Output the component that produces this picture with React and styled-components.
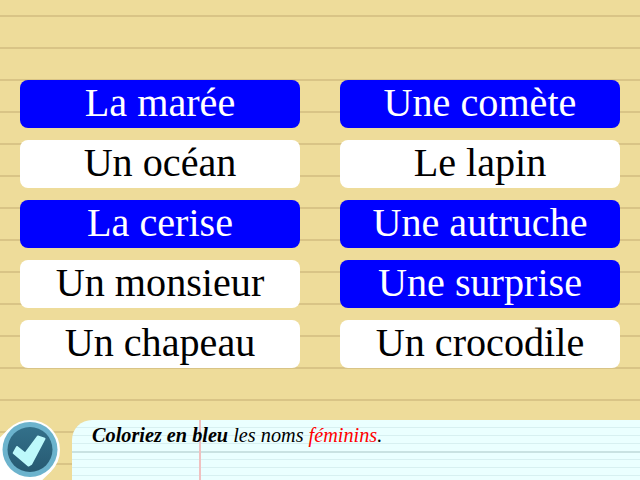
import styled, { createGlobalStyle } from "styled-components";

const GlobalStyle = createGlobalStyle`
  html, body {
    margin: 0;
    padding: 0;
    overflow: hidden;
  }
`;

const leftWords = [
  { label: "La marée", on: true },
  { label: "Un océan" },
  { label: "La cerise", on: true },
  { label: "Un monsieur" },
  { label: "Un chapeau" },
];

const rightWords = [
  { label: "Une comète", on: true },
  { label: "Le lapin" },
  { label: "Une autruche", on: true },
  { label: "Une surprise", on: true },
  { label: "Un crocodile" },
];

const App = () => {
  return (
    <Page>
      <GlobalStyle />
      <Board>
        <Column>
          {leftWords.map((w) => (
            <Word key={w.label} $on={w.on}>{w.label}</Word>
          ))}
        </Column>
        <Column>
          {rightWords.map((w) => (
            <Word key={w.label} $on={w.on}>{w.label}</Word>
          ))}
        </Column>
      </Board>
      <Footer>
        <CheckButton>
          <CheckIcon viewBox="0 0 60 60">
            <defs>
              <linearGradient id="disc" x1="0" y1="0" x2="0" y2="1">
                <stop offset="0" stopColor="#33708a" />
                <stop offset="1" stopColor="#275a72" />
              </linearGradient>
            </defs>
            <circle cx="30" cy="30" r="30" fill="#fff" />
            <polygon points="8.8,8.8 51.2,51.2 42.4,60 0,60 0,17.6" fill="#fff" />
            <circle cx="30" cy="29.5" r="27.5" fill="#6cb3cd" />
            <circle cx="30" cy="29.5" r="22.5" fill="url(#disc)" />
            <polygon
              points="17,27 25.2,33.5 37.8,16.5 44.5,18.8 31.3,43.8 28.4,45.6 13.7,33"
              fill="#bdf9fb"
              stroke="#bdf9fb"
              strokeWidth="2"
              strokeLinejoin="round"
            />
          </CheckIcon>
        </CheckButton>
        <Notebook>
          <Instruction>
            <strong>Coloriez en bleu</strong> les noms <Red>féminins</Red>.
          </Instruction>
        </Notebook>
      </Footer>
    </Page>
  );
};

export default App;

const Page = styled.div`
  width: 640px;
  height: 480px;
  display: flex;
  flex-direction: column;
  justify-content: space-between;
  background-color: #eedc9a;
  background-image: repeating-linear-gradient(
    to bottom,
    transparent 0,
    transparent 15px,
    #d9c486 15px,
    #d9c486 17px,
    transparent 17px,
    transparent 32px
  );
  font-family: "Liberation Serif", serif;
`;

const Board = styled.div`
  display: flex;
  justify-content: space-between;
  padding: 80px 20px 0;
`;

const Column = styled.div`
  width: 280px;
  display: flex;
  flex-direction: column;
  gap: 12px;
`;

const Word = styled.div`
  height: 48px;
  line-height: 46px;
  border-radius: 8px;
  text-align: center;
  font-size: 40.16px;
  background: ${(props) => (props.$on ? "#0000ff" : "#ffffff")};
  color: ${(props) => (props.$on ? "#ffffff" : "#000000")};
`;

const Footer = styled.div`
  height: 60px;
  display: flex;
  align-items: stretch;
  gap: 12px;
`;

const CheckButton = styled.div`
  width: 60px;
  height: 60px;
  flex-shrink: 0;
`;

const CheckIcon = styled.svg`
  display: block;
  width: 60px;
  height: 60px;
`;

const Notebook = styled.div`
  flex: 1;
  padding: 4px 0 0 20px;
  border-top-left-radius: 20px;
  background-color: #eaffff;
  background-image: linear-gradient(
      to right,
      transparent 127px,
      #f0c0c0 127px,
      #f0c0c0 129px,
      transparent 129px
    ),
    linear-gradient(
      to bottom,
      transparent 31px,
      #c9e2e2 31px,
      #c9e2e2 33px,
      transparent 33px
    ),
    repeating-linear-gradient(
      to bottom,
      transparent 0,
      transparent 7px,
      #d7f0f1 7px,
      #d7f0f1 9px,
      transparent 9px,
      transparent 16px
    );
  background-size: 100% 100%, 100% 100%, 100% 8px;
`;

const Instruction = styled.div`
  font-size: 20.25px;
  line-height: 22px;
  font-style: italic;
  color: #000;
`;

const Red = styled.span`
  color: #ff0000;
`;
